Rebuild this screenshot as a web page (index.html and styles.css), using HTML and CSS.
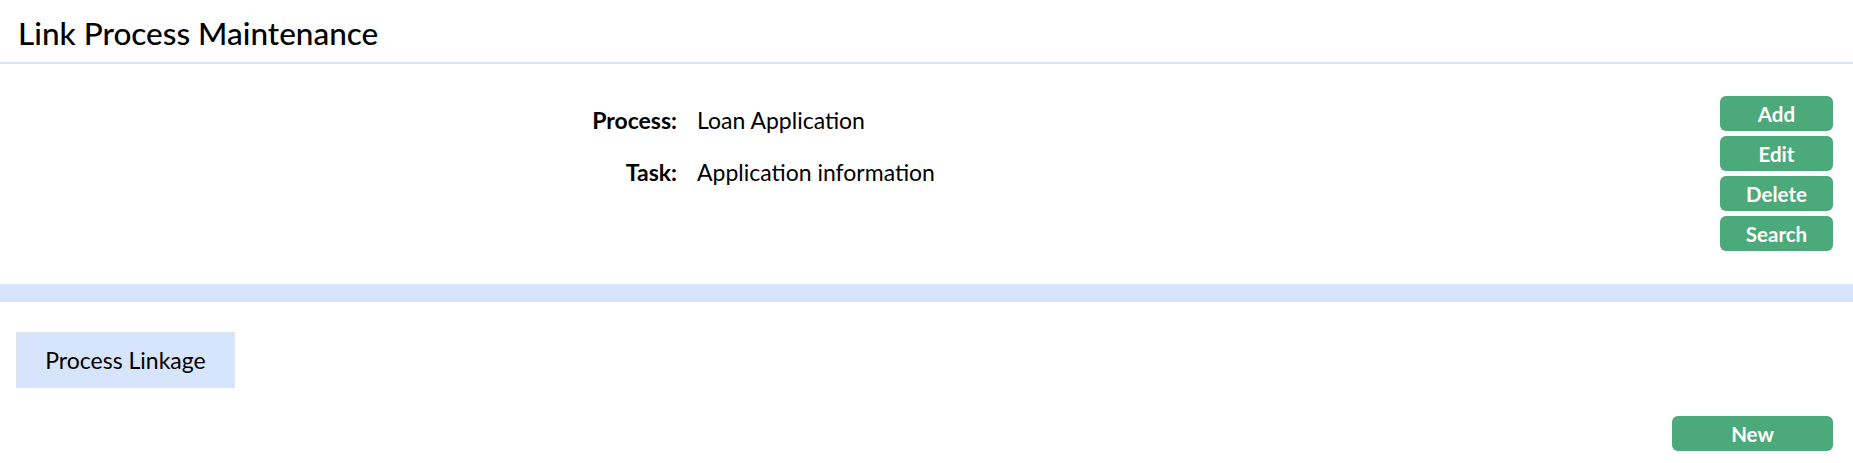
FILE: index.html
```html
<!DOCTYPE html>
<html lang="en">
<head>
    <meta charset="UTF-8">
    <meta name="viewport" content="width=device-width, initial-scale=1.0">
    <title>Link Process Maintenance</title>
    <link rel="stylesheet" href="styles.css">
</head>
<body>
    <div class="page-header">
        <h1 class="page-title">Link Process Maintenance</h1>
    </div>

    <div class="detail-panel">
        <div class="detail-fields">
            <span class="field-label">Process:</span>
            <span class="field-value">Loan Application</span>
            <span class="field-label">Task:</span>
            <span class="field-value">Application information</span>
        </div>
        <div class="detail-actions">
            <button class="btn">Add</button>
            <button class="btn">Edit</button>
            <button class="btn">Delete</button>
            <button class="btn">Search</button>
        </div>
    </div>

    <div class="divider-bar"></div>

    <div class="tab-strip">
        <div class="tab active">Process Linkage</div>
    </div>

    <div class="linkage-actions">
        <button class="btn btn-wide">New</button>
    </div>
</body>
</html>
```

FILE: styles.css
```css
body {
    margin: 0;
    font-family: Lato, "Open Sans", sans-serif;
    color: #000;
    background: #fff;
}
.page-header {
    height: 62px;
    border-bottom: 2px solid #d6e4fc;
    display: flex;
    align-items: center;
    padding: 0 18px;
}
.page-title {
    margin: 0;
    font-size: 31.5px;
    font-weight: 500;
    padding-top: 3px;
}
.detail-panel {
    display: flex;
    padding: 32px 20px 33px 16px;
}
.detail-fields {
    flex: 1;
    display: grid;
    grid-template-columns: 661px 1fr;
    grid-auto-rows: 52px;
    column-gap: 20px;
    align-content: start;
    font-size: 23px;
}
.field-label {
    font-weight: 700;
    text-align: right;
    line-height: 48px;
}
.field-value {
    line-height: 48px;
}
.detail-actions {
    display: flex;
    flex-direction: column;
    gap: 5px;
    width: 113px;
}
.btn {
    height: 35px;
    border: none;
    border-radius: 6px;
    background: #4caa7a;
    color: #fff;
    font-family: inherit;
    font-weight: 700;
    font-size: 20.5px;
    cursor: pointer;
    padding: 0;
}
.divider-bar {
    height: 18px;
    background: #d6e4fc;
}
.tab-strip {
    display: flex;
    padding: 30px 16px 0;
}
.tab {
    width: 217px;
    height: 54px;
    border: 1px solid #dfe3ea;
    background: #d6e4fc;
    display: flex;
    align-items: center;
    justify-content: center;
    font-size: 23px;
}
.linkage-actions {
    display: flex;
    justify-content: flex-end;
    padding: 28px 20px 0;
}
.btn-wide {
    width: 161px;
}
```
